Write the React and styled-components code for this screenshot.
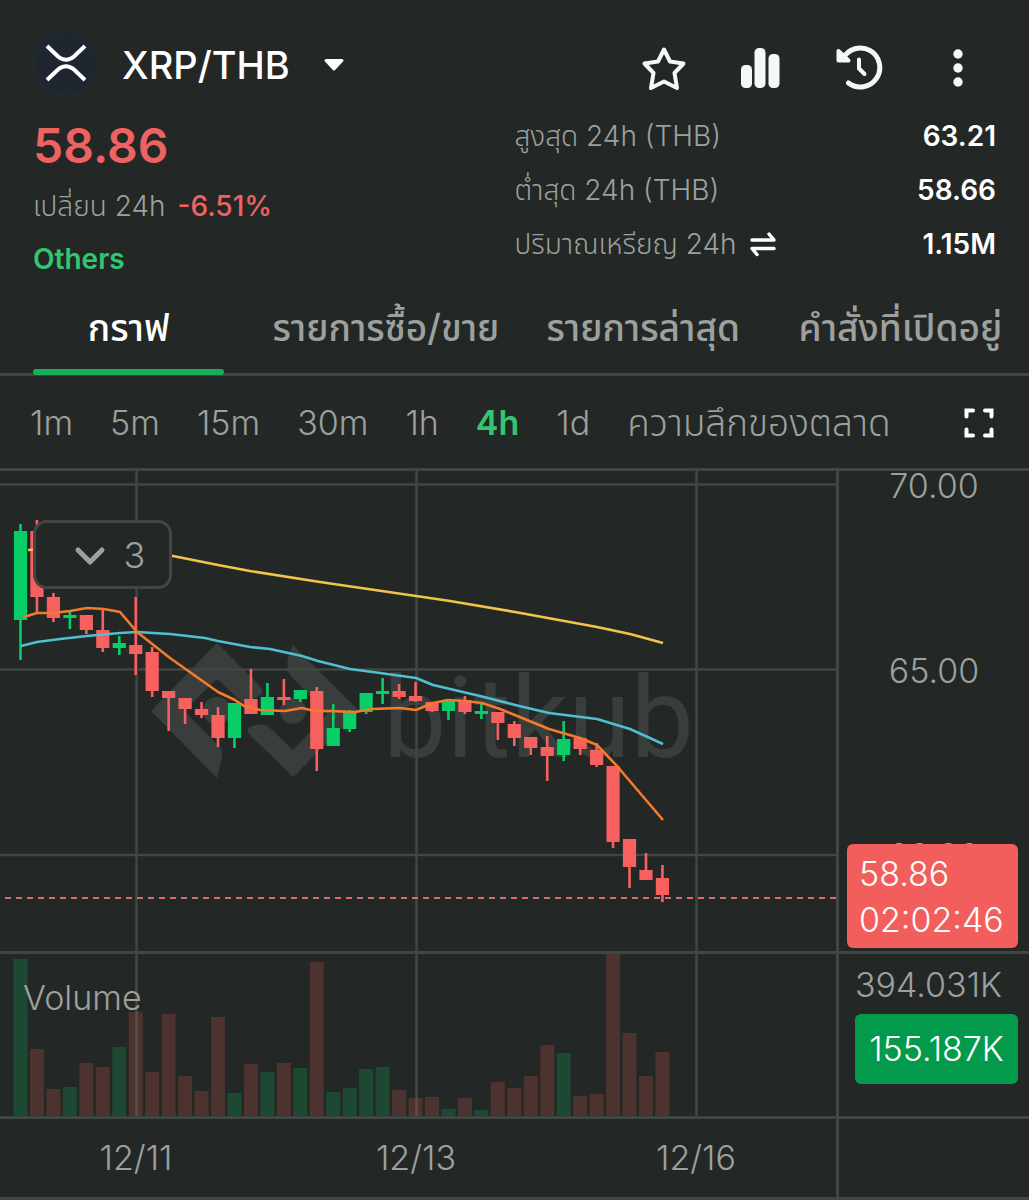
import { useState } from "react";
import styled, { createGlobalStyle } from "styled-components";

const bg = "#232826";
const line = "#404643";
const muted = "#9ca19e";
const green = "#33c671";
const red = "#ee6361";

const GlobalStyle = createGlobalStyle`
  * {
    box-sizing: border-box;
  }
  body {
    margin: 0;
    background: ${bg};
    color: #fff;
    font-family: Inter, "Noto Sans Thai", "Noto Sans", sans-serif;
  }
  button {
    border: 0;
    padding: 0;
    background: none;
    color: inherit;
    font: inherit;
    cursor: pointer;
  }
  svg {
    display: block;
  }
`;

const Page = styled.main`
  border-bottom: 4px solid #060807;
`;

const TopBar = styled.header`
  display: flex;
  justify-content: space-between;
  align-items: center;
  padding: 30px 47px 0 33px;
`;

const PairButton = styled.button`
  display: flex;
  align-items: center;
  gap: 23px;
  height: 66px;
  font-size: 38px;
  font-weight: 500;
`;

const PairName = styled.span`
  display: flex;
  align-items: center;
  gap: 33px;
  padding-top: 4px;
`;

const Tools = styled.div`
  display: flex;
  align-self: flex-end;
  gap: 50px;
`;

const ToolButton = styled.button`
  display: flex;
  align-items: center;
  width: 48px;
  height: 56px;
`;

const Summary = styled.section`
  display: grid;
  grid-template-columns: 1fr 1fr;
  margin-top: 13px;
  padding: 0 33px;
`;

const PriceBlock = styled.div`
  padding-top: 7px;
`;

const Price = styled.div`
  color: ${red};
  font-size: 48px;
  font-weight: 600;
  line-height: 60px;
`;

const Change = styled.div`
  display: flex;
  gap: 12px;
  color: ${muted};
  font-size: 28px;
  font-weight: 300;
  line-height: 60px;
`;

const Percent = styled.span`
  color: ${red};
  font-weight: 500;
`;

const Category = styled.a`
  display: inline-block;
  color: ${green};
  font-size: 28px;
  font-weight: 600;
  line-height: 46px;
  text-decoration: none;
`;

const Stats = styled.dl`
  margin: 0;
`;

const StatRow = styled.div`
  display: flex;
  justify-content: space-between;
  align-items: center;
  font-size: 28px;
  line-height: 54px;
  white-space: nowrap;
`;

const StatLabel = styled.dt`
  display: flex;
  align-items: center;
  gap: 12px;
  color: ${muted};
  font-weight: 300;
`;

const StatValue = styled.dd`
  margin: 0;
  font-weight: 600;
`;

const Tabs = styled.nav`
  display: grid;
  grid-template-columns: repeat(4, 1fr);
  gap: 66px;
  padding: 0 33px;
  border-bottom: 3px solid ${line};
`;

const Tab = styled.button`
  position: relative;
  display: flex;
  justify-content: center;
  min-width: 0;
  color: ${(p) => (p.$active ? "#fff" : muted)};
  font-size: 37px;
  font-weight: 500;
  line-height: 91px;
  white-space: nowrap;

  &::after {
    content: "";
    display: ${(p) => (p.$active ? "block" : "none")};
    position: absolute;
    left: 0;
    right: 0;
    bottom: -2px;
    height: 6px;
    border-radius: 3px;
    background: #17af5c;
  }
`;

const Frames = styled.div`
  display: flex;
  align-items: center;
  gap: 37px;
  padding: 2px 35px 0 30px;
  border-bottom: 3px solid ${line};
`;

const Frame = styled.button`
  color: ${(p) => (p.$active ? green : muted)};
  font-size: ${(p) => (p.$thai ? 37 : 34)}px;
  font-weight: ${(p) => (p.$active ? 600 : 300)};
  line-height: 90px;
  white-space: nowrap;
`;

const FullScreen = styled.button`
  margin-left: auto;
`;

const Chart = styled.section`
  display: grid;
  grid-template-columns: minmax(0, 1fr) 193px;
  color: ${muted};
  font-size: 34px;
  font-weight: 350;
`;

const Pane = styled.div`
  position: relative;
  border-bottom: 3px solid ${line};
`;

const Scale = styled.div`
  position: relative;
  border-left: 3px solid ${line};
  border-bottom: 3px solid ${line};
`;

const PriceTicks = styled.div`
  display: flex;
  flex-direction: column;
  gap: 155px;
  line-height: 30px;
  text-align: center;
`;

const Plot = styled.svg`
  width: 100%;
  height: ${(p) => p.$height}px;
`;

const Legend = styled.button`
  position: absolute;
  top: 49px;
  left: 33px;
  display: flex;
  justify-content: center;
  align-items: center;
  gap: 18px;
  width: 139px;
  height: 69px;
  padding-left: 14px;
  border: 3px solid ${line};
  border-radius: 14px;
  background: ${bg};
  font-size: 36px;
`;

const VolumeLabel = styled.div`
  position: absolute;
  top: 26px;
  left: 23px;
  line-height: 36px;
`;

const Badge = styled.div`
  border-radius: 6px;
  background: ${(p) => (p.$up ? "#049a4b" : "#f25e5c")};
  color: #fff;
`;

const PriceBadge = styled(Badge)`
  position: absolute;
  top: 373px;
  left: 8px;
  right: 11px;
  padding: 7px 12px 5px;
  line-height: 46px;
`;

const VolumeScale = styled(Scale)`
  padding: 14px 11px 0 16px;
`;

const VolumeTick = styled.div`
  line-height: 34px;
`;

const VolumeBadge = styled(Badge)`
  margin-top: 12px;
  line-height: 70px;
  text-align: center;
`;

const Dates = styled.div`
  display: flex;
  gap: 180px;
  padding-left: 86px;
  border-bottom: 3px solid ${line};
  line-height: 78px;
`;

const DateTick = styled.time`
  flex: none;
  width: 100px;
  text-align: center;
`;

const stats = [
  { label: "สูงสุด 24h (THB)", value: "63.21" },
  { label: "ต่ำสุด 24h (THB)", value: "58.66" },
  { label: "ปริมาณเหรียญ 24h", value: "1.15M", swap: true },
];

const tabs = ["กราฟ", "รายการซื้อ/ขาย", "รายการล่าสุด", "คำสั่งที่เปิดอยู่"];

const depth = "ความลึกของตลาด";
const frames = ["1m", "5m", "15m", "30m", "1h", "4h", "1d", depth];

// up, wick top, body top, body bottom, wick bottom, volume top
const candles = [
  [1, 524, 531, 620, 660, 959],
  [0, 520, 531, 597, 612, 1049],
  [0, 593, 597, 618, 622, 1089],
  [1, 610, 615, 618, 629, 1087],
  [0, 615, 615, 630, 634, 1063],
  [0, 609, 630, 648, 652, 1067],
  [1, 636, 643, 648, 655, 1047],
  [0, 597, 645, 654, 675, 1012],
  [0, 647, 652, 691, 697, 1072],
  [0, 691, 691, 698, 731, 1014],
  [0, 698, 698, 709, 724, 1076],
  [0, 702, 709, 715, 718, 1091],
  [0, 707, 715, 738, 747, 1017],
  [1, 703, 703, 738, 748, 1093],
  [0, 669, 699, 714, 714, 1064],
  [1, 683, 697, 715, 715, 1072],
  [0, 679, 697, 700, 705, 1063],
  [1, 690, 690, 699, 702, 1068],
  [0, 687, 691, 749, 771, 962],
  [1, 704, 728, 746, 746, 1092],
  [1, 710, 711, 729, 732, 1088],
  [1, 693, 693, 712, 714, 1069],
  [1, 678, 691, 694, 704, 1067],
  [0, 684, 691, 697, 699, 1090],
  [0, 682, 696, 701, 702, 1098],
  [0, 702, 702, 711, 712, 1097],
  [1, 700, 701, 711, 720, 1109],
  [0, 696, 700, 712, 714, 1098],
  [1, 703, 711, 714, 719, 1110],
  [0, 712, 712, 723, 740, 1082],
  [0, 721, 724, 738, 746, 1088],
  [0, 737, 737, 748, 755, 1076],
  [0, 736, 747, 756, 781, 1045],
  [1, 721, 739, 755, 761, 1053],
  [0, 737, 738, 749, 755, 1096],
  [0, 743, 750, 765, 767, 1094],
  [0, 766, 766, 842, 848, 954],
  [0, 839, 839, 867, 888, 1033],
  [0, 853, 870, 880, 880, 1076],
  [0, 865, 878, 895, 902, 1052],
];

const candleX = (i) => 20.5 + i * 16.46;

const averages = [
  {
    color: "#f0c548",
    points: "28,550 100,545 173,556 218,565 250,571 320,582 416,596 450,601 515,612 597,627 630,634 663,643",
  },
  {
    color: "#50bfd0",
    points:
      "21,646 37,642 60,639 87,636 120,633 137,632 170,634 205,638 218,641 250,647 270,649 302,656 318,661 350,669 380,673 416,678 433,685 480,696 515,705 549,713 597,719 630,729 663,744",
  },
  {
    color: "#f47b2c",
    points:
      "24,617 37,613 53,613 70,611 87,608 104,609 120,612 137,632 170,658 218,692 235,700 244,706 260,710 285,711 302,708 314,711 330,711 355,712 372,709 400,708 416,710 433,703 448,700 465,701 482,703 500,709 549,729 580,738 597,745 617,766 663,820",
  },
];

const XrpLogo = () => (
  <svg width="66" height="66" viewBox="0 0 66 66" aria-hidden="true">
    <circle cx="33" cy="33" r="32.5" fill="#20262f" stroke="#272c35" />
    <g fill="none" stroke="#fff" strokeWidth="4">
      <path d="M14 16 25 26.500Q33 33 41 26.500L52 16" />
      <path d="M14 50 25 39.500Q33 33 41 39.500L52 50" />
    </g>
  </svg>
);

const Caret = () => (
  <svg width="22" height="16" viewBox="0 0 22 16" aria-hidden="true">
    <path d="M3 3.500H19L11 12Z" fill="#fff" stroke="#fff" strokeWidth="3" strokeLinejoin="round" />
  </svg>
);

const StarIcon = () => (
  <svg width="48" height="48" viewBox="0 0 48 48" aria-hidden="true">
    <path
      d="M24 5.500 30 17.500 43.500 19.500 34.500 29 37 44 24 37.500 11 44 13.500 29 4.500 19.500 18 17.500Z"
      fill="none"
      stroke="#f5f8f6"
      strokeWidth="4"
      strokeLinejoin="round"
    />
  </svg>
);

const BarsIcon = () => (
  <svg width="48" height="48" viewBox="0 0 48 48" fill="#f5f8f6" aria-hidden="true">
    <rect x="3" y="21" width="11" height="23" rx="4.500" />
    <rect x="16.500" y="4" width="11" height="40" rx="4.500" />
    <rect x="30.500" y="10" width="11" height="34" rx="4.500" />
  </svg>
);

const HistoryIcon = () => (
  <svg width="48" height="48" viewBox="0 0 48 48" aria-hidden="true">
    <g fill="none" stroke="#f5f8f6" strokeWidth="5" strokeLinecap="round" strokeLinejoin="round">
      <path d="M7 14.500A19.500 19.500 0 1 1 12.500 39" />
      <path d="M23 15.500V24.500L28.500 30" strokeWidth="4" />
    </g>
    <path d="M2.500 7 12.500 16.500H2.500Z" fill="#f5f8f6" stroke="#f5f8f6" strokeWidth="4" strokeLinejoin="round" />
  </svg>
);

const MoreIcon = () => (
  <svg width="48" height="48" viewBox="0 0 48 48" fill="#f5f8f6" aria-hidden="true">
    <circle cx="24" cy="10" r="4.700" />
    <circle cx="24" cy="24" r="4.700" />
    <circle cx="24" cy="38" r="4.700" />
  </svg>
);

const SwapIcon = () => (
  <svg width="28" height="26" viewBox="0 0 28 26" fill="none" stroke="#fff" strokeWidth="3.500" strokeLinecap="round" strokeLinejoin="round" aria-hidden="true">
    <path d="M3 9H25L20 3" />
    <path d="M25 17.500H3L8 23.500" />
  </svg>
);

const ExpandIcon = () => (
  <svg width="30" height="30" viewBox="0 0 30 30" fill="none" stroke="#fff" strokeWidth="4" strokeLinecap="round" aria-hidden="true">
    <path d="M2.500 8.500V2.500H9" />
    <path d="M21 2.500H27.500V8.500" />
    <path d="M27.500 21.500V27.500H21" />
    <path d="M9 27.500H2.500V21.500" />
  </svg>
);

const Watermark = () => (
  <g fill="#393d3b">
    <path d="M217 643 260 686Q265 693 259 696Q252 699 245 705L217 679 184 711 219 746Q223 751 222 758L217 778 151 711Z" />
    <circle cx="217" cy="711" r="14" />
    <path d="M293 645 359 711 293 777 249 734Q245 728 252 726Q263 723 268 726L293 750 327 714 290 675Q286 667 288 658Z" />
    <circle cx="293" cy="711" r="13" />
    <text x="383" y="757" fontFamily="Roboto, sans-serif" fontSize="113" fontWeight="400">
      bitkub
    </text>
  </g>
);

const PricePlot = () => (
  <Plot $height={480} viewBox="0 471 836 480" preserveAspectRatio="xMinYMin meet" role="img" aria-label="XRP/THB">
    <Watermark />
    <g stroke={line} strokeWidth="2.500">
      <path d="M0 484.500H836M0 669.500H836M0 855H836" />
      <path d="M136.500 471V951M416.500 471V951M696.500 471V951" />
    </g>
    <path d="M5 898H836" stroke="#d96b68" strokeWidth="2" strokeDasharray="6 5" />
    {candles.map(([up, high, top, bottom, low], i) => (
      <g key={i} fill={up ? "#07ce66" : "#f6605f"}>
        <rect x={candleX(i) - 1.3} y={high} width="2.600" height={low - high} />
        <rect x={candleX(i) - 6.6} y={top} width="13.200" height={bottom - top} />
      </g>
    ))}
    {averages.map(({ color, points }) => (
      <polyline key={color} points={points} fill="none" stroke={color} strokeWidth="2.600" strokeLinejoin="round" />
    ))}
  </Plot>
);

const VolumePlot = () => (
  <Plot $height={162} viewBox="0 954 836 162" preserveAspectRatio="xMinYMin meet" role="img" aria-label="Volume">
    {candles.map(([up, , , , , top], i) => (
      <rect key={i} x={candleX(i) - 7} y={top} width="14" height={1116 - top} fill={up ? "#1d4831" : "#4d332f"} />
    ))}
    <path d="M136.500 954V1116M416.500 954V1116M696.500 954V1116" stroke="#6b756f" strokeOpacity="0.42" strokeWidth="2.500" />
  </Plot>
);

const App = () => {
  const [tab, setTab] = useState(tabs[0]);
  const [frame, setFrame] = useState("4h");

  return (
    <Page>
      <GlobalStyle />
      <TopBar>
        <PairButton type="button">
          <XrpLogo />
          <PairName>
            XRP/THB
            <Caret />
          </PairName>
        </PairButton>
        <Tools>
          <ToolButton type="button" aria-label="Favourite">
            <StarIcon />
          </ToolButton>
          <ToolButton type="button" aria-label="Indicators">
            <BarsIcon />
          </ToolButton>
          <ToolButton type="button" aria-label="History">
            <HistoryIcon />
          </ToolButton>
          <ToolButton type="button" aria-label="More">
            <MoreIcon />
          </ToolButton>
        </Tools>
      </TopBar>

      <Summary>
        <PriceBlock>
          <Price>58.86</Price>
          <Change>
            <span>เปลี่ยน 24h</span>
            <Percent>-6.51%</Percent>
          </Change>
          <Category href="#others">Others</Category>
        </PriceBlock>
        <Stats>
          {stats.map(({ label, value, swap }) => (
            <StatRow key={label}>
              <StatLabel>
                {label}
                {swap && <SwapIcon />}
              </StatLabel>
              <StatValue>{value}</StatValue>
            </StatRow>
          ))}
        </Stats>
      </Summary>

      <Tabs>
        {tabs.map((name) => (
          <Tab key={name} type="button" $active={name === tab} onClick={() => setTab(name)}>
            {name}
          </Tab>
        ))}
      </Tabs>

      <Frames>
        {frames.map((name) => (
          <Frame
            key={name}
            type="button"
            $active={name === frame}
            $thai={name === depth}
            onClick={() => setFrame(name)}
          >
            {name}
          </Frame>
        ))}
        <FullScreen type="button" aria-label="Full screen">
          <ExpandIcon />
        </FullScreen>
      </Frames>

      <Chart>
        <Pane>
          <PricePlot />
          <Legend type="button">
            <svg width="32" height="22" viewBox="0 0 32 22" aria-hidden="true">
              <path d="M4 6 16 18 28 6" fill="none" stroke={muted} strokeWidth="5" strokeLinecap="round" strokeLinejoin="round" />
            </svg>
            3
          </Legend>
        </Pane>
        <Scale>
          <PriceTicks>
            <span>70.00</span>
            <span>65.00</span>
            <span>60.00</span>
          </PriceTicks>
          <PriceBadge>
            <div>58.86</div>
            <div>02:02:46</div>
          </PriceBadge>
        </Scale>

        <Pane>
          <VolumePlot />
          <VolumeLabel>Volume</VolumeLabel>
        </Pane>
        <VolumeScale>
          <VolumeTick>394.031K</VolumeTick>
          <VolumeBadge $up>155.187K</VolumeBadge>
        </VolumeScale>

        <Dates>
          <DateTick>12/11</DateTick>
          <DateTick>12/13</DateTick>
          <DateTick>12/16</DateTick>
        </Dates>
        <Scale />
      </Chart>
    </Page>
  );
};

export default App;
